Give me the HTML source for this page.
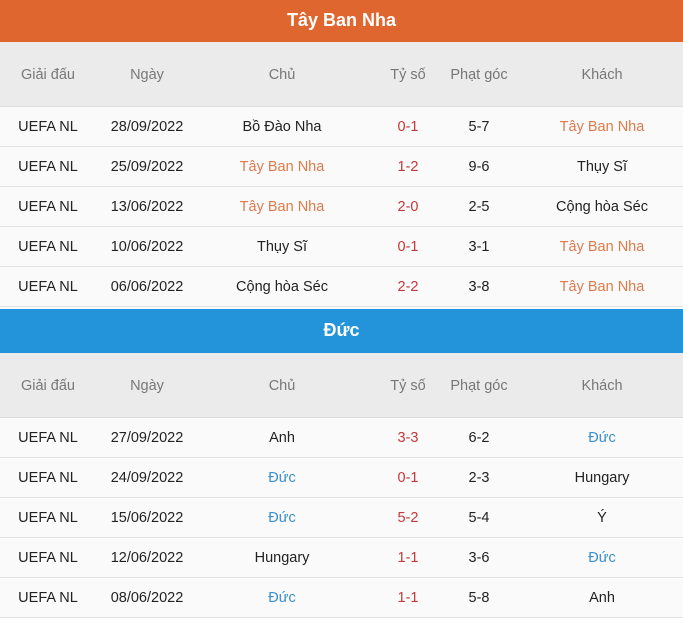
<!DOCTYPE html><html><head><meta charset="utf-8"><style>
body{margin:0;width:683px;height:602px;overflow:hidden;background:#fafafa;font-family:"Liberation Sans",sans-serif;font-size:14.5px;color:#222}
.bar{position:absolute;left:0;width:683px;color:#fff;font-weight:bold;font-size:18px;text-align:center}
.hd{position:absolute;left:0;width:683px;height:65px;background:#ebebeb;color:#777;border-bottom:1px solid #ddd;box-sizing:border-box;padding-top:2px}
.r{position:absolute;left:0;width:683px;height:40px;border-bottom:1px solid #e3e3e3;box-sizing:border-box}
.c{position:absolute;top:0;height:100%;display:flex;align-items:center;justify-content:center;white-space:nowrap;transform:translateX(-50%)}
.hd .c{height:62px;top:2px}
.o{color:#e07a4c}.b{color:#3a8fd0}.s{color:#c0393b}
</style></head><body>
<div class="bar" style="top:0;height:42px;line-height:40px;background:#e0662f">Tây Ban Nha</div>
<div class="hd" style="top:42px"><div class="c" style="left:48px">Giải đấu</div><div class="c" style="left:147px">Ngày</div><div class="c" style="left:282px">Chủ</div><div class="c" style="left:408px">Tỷ số</div><div class="c" style="left:479px">Phạt góc</div><div class="c" style="left:602px">Khách</div></div>
<div class="r" style="top:107px"><div class="c" style="left:48px">UEFA NL</div><div class="c" style="left:147px">28/09/2022</div><div class="c" style="left:282px">Bồ Đào Nha</div><div class="c s" style="left:408px">0-1</div><div class="c" style="left:479px">5-7</div><div class="c o" style="left:602px">Tây Ban Nha</div></div>
<div class="r" style="top:147px"><div class="c" style="left:48px">UEFA NL</div><div class="c" style="left:147px">25/09/2022</div><div class="c o" style="left:282px">Tây Ban Nha</div><div class="c s" style="left:408px">1-2</div><div class="c" style="left:479px">9-6</div><div class="c" style="left:602px">Thụy Sĩ</div></div>
<div class="r" style="top:187px"><div class="c" style="left:48px">UEFA NL</div><div class="c" style="left:147px">13/06/2022</div><div class="c o" style="left:282px">Tây Ban Nha</div><div class="c s" style="left:408px">2-0</div><div class="c" style="left:479px">2-5</div><div class="c" style="left:602px">Cộng hòa Séc</div></div>
<div class="r" style="top:227px"><div class="c" style="left:48px">UEFA NL</div><div class="c" style="left:147px">10/06/2022</div><div class="c" style="left:282px">Thụy Sĩ</div><div class="c s" style="left:408px">0-1</div><div class="c" style="left:479px">3-1</div><div class="c o" style="left:602px">Tây Ban Nha</div></div>
<div class="r" style="top:267px"><div class="c" style="left:48px">UEFA NL</div><div class="c" style="left:147px">06/06/2022</div><div class="c" style="left:282px">Cộng hòa Séc</div><div class="c s" style="left:408px">2-2</div><div class="c" style="left:479px">3-8</div><div class="c o" style="left:602px">Tây Ban Nha</div></div>
<div class="bar" style="top:309px;height:44px;line-height:42px;background:#2394d9">Đức</div>
<div class="hd" style="top:353px"><div class="c" style="left:48px">Giải đấu</div><div class="c" style="left:147px">Ngày</div><div class="c" style="left:282px">Chủ</div><div class="c" style="left:408px">Tỷ số</div><div class="c" style="left:479px">Phạt góc</div><div class="c" style="left:602px">Khách</div></div>
<div class="r" style="top:418px"><div class="c" style="left:48px">UEFA NL</div><div class="c" style="left:147px">27/09/2022</div><div class="c" style="left:282px">Anh</div><div class="c s" style="left:408px">3-3</div><div class="c" style="left:479px">6-2</div><div class="c b" style="left:602px">Đức</div></div>
<div class="r" style="top:458px"><div class="c" style="left:48px">UEFA NL</div><div class="c" style="left:147px">24/09/2022</div><div class="c b" style="left:282px">Đức</div><div class="c s" style="left:408px">0-1</div><div class="c" style="left:479px">2-3</div><div class="c" style="left:602px">Hungary</div></div>
<div class="r" style="top:498px"><div class="c" style="left:48px">UEFA NL</div><div class="c" style="left:147px">15/06/2022</div><div class="c b" style="left:282px">Đức</div><div class="c s" style="left:408px">5-2</div><div class="c" style="left:479px">5-4</div><div class="c" style="left:602px">Ý</div></div>
<div class="r" style="top:538px"><div class="c" style="left:48px">UEFA NL</div><div class="c" style="left:147px">12/06/2022</div><div class="c" style="left:282px">Hungary</div><div class="c s" style="left:408px">1-1</div><div class="c" style="left:479px">3-6</div><div class="c b" style="left:602px">Đức</div></div>
<div class="r" style="top:578px"><div class="c" style="left:48px">UEFA NL</div><div class="c" style="left:147px">08/06/2022</div><div class="c b" style="left:282px">Đức</div><div class="c s" style="left:408px">1-1</div><div class="c" style="left:479px">5-8</div><div class="c" style="left:602px">Anh</div></div>
</body></html>
